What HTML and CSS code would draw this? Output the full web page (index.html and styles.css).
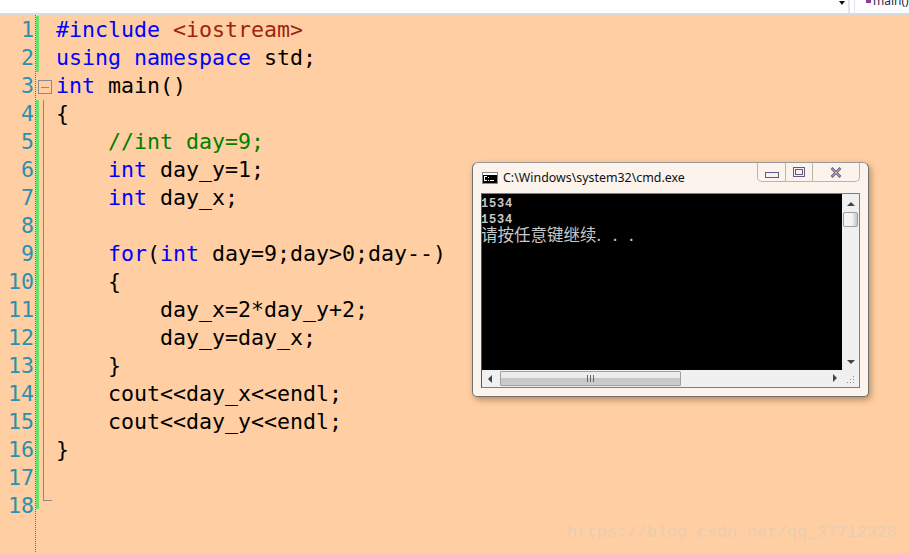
FILE: index.html
```html
<!DOCTYPE html>
<html lang="en">
<head>
<meta charset="utf-8">
<title>main</title>
<link rel="stylesheet" href="styles.css">
</head>
<body>
<header class="topbar">
  <div class="combo"><span class="combo-arrow"></span></div>
  <div class="member"><span class="member-icon"></span><span class="member-text">main()</span></div>
</header>
<main class="editor">
  <div class="numbers">
    <div>1</div><div>2</div><div>3</div><div>4</div><div>5</div><div>6</div><div>7</div><div>8</div><div>9</div><div>10</div><div>11</div><div>12</div><div>13</div><div>14</div><div>15</div><div>16</div><div>17</div><div>18</div>
  </div>
  <div class="margin">
    <span class="change c1"></span><span class="change c2"></span>
    <span class="fold-box"></span>
    <span class="fold-line"></span>
    <span class="fold-end"></span>
  </div>
  <pre class="code"><span class="kw">#include</span> <span class="str">&lt;iostream&gt;</span>
<span class="kw">using</span> <span class="kw">namespace</span> std;
<span class="kw">int</span> main()
{
    <span class="cm">//int day=9;</span>
    <span class="kw">int</span> day_y=1;
    <span class="kw">int</span> day_x;

    <span class="kw">for</span>(<span class="kw">int</span> day=9;day&gt;0;day--)
    {
        day_x=2*day_y+2;
        day_y=day_x;
    }
    cout&lt;&lt;day_x&lt;&lt;endl;
    cout&lt;&lt;day_y&lt;&lt;endl;
}</pre>
</main>
<section class="cmd">
  <div class="titlebar">
    <svg class="cmd-icon" width="16" height="12" viewBox="0 0 16 12"><rect x="0.5" y="0.5" width="15" height="11" fill="#fff" stroke="#8a8a8a"/><rect x="1" y="3" width="14" height="8" fill="#000"/><path d="M2 4h3v1H3v3h2v1H2zM6 5h1v1H6zM6 8h1v1H6zM8 8h4v1H8z" fill="#fff"/></svg>
    <span class="cmd-title">C:\Windows\system32\cmd.exe</span>
    <div class="controls">
      <div class="ctl ctl-min"><span class="min-glyph"></span></div>
      <div class="ctl ctl-max"><span class="max-glyph"></span></div>
      <div class="ctl ctl-close"><svg width="12" height="11" viewBox="0 0 12 11"><path d="M1.5 1 L10.5 10 M10.5 1 L1.5 10" stroke="#5f5a78" stroke-width="2.6" fill="none"/><path d="M2 1.5 L10 9.5 M10 1.5 L2 9.5" stroke="#f5f1f3" stroke-width="0.8" fill="none"/></svg></div>
    </div>
  </div>
  <div class="client">
    <div class="client-row">
      <pre class="console"><span class="out">1534</span>
<span class="out">1534</span>
<span class="cn">请按任意键继续<span class="dots">. . .</span></span></pre>
      <div class="vscroll">
        <span class="arr-up"></span>
        <span class="vthumb"></span>
        <span class="arr-down"></span>
      </div>
    </div>
    <div class="hscroll">
      <span class="arr-left"></span>
      <div class="hthumb"><span class="grip"></span></div>
      <span class="arr-right"></span>
      <svg class="resize" width="12" height="12" viewBox="0 0 12 12"><path d="M9 2h1v1H9zM6 5h1v1H6zM9 5h1v1H9zM3 8h1v1H3zM6 8h1v1H6zM9 8h1v1H9z" fill="#8c8c8c"/></svg>
    </div>
  </div>
</section>
<div class="watermark">https://blog.csdn.net/qq_37712328</div>
</body>
</html>
```
FILE: styles.css
```css
html, body {
  margin: 0;
  padding: 0;
  width: 909px;
  height: 553px;
  overflow: hidden;
  background: #ffcfa3;
}
.topbar {
  height: 13px;
  background: #fff;
  border-bottom: 2px solid #d8dbe0;
  display: flex;
  justify-content: flex-end;
  overflow: hidden;
}
.combo {
  width: 68px;
  position: relative;
  border-right: 2px solid #e4e6ea;
}
.combo-arrow {
  position: absolute;
  right: 3px;
  top: 1px;
  border-left: 3px solid transparent;
  border-right: 3px solid transparent;
  border-top: 4px solid #111;
}
.member {
  width: 55px;
  margin-left: 4px;
  border-left: 1px solid #e4e6ea;
  display: flex;
  gap: 2px;
  padding-left: 11px;
  box-sizing: border-box;
  overflow: hidden;
}
.member-icon {
  width: 5px;
  height: 3px;
  background: #8a3c9c;
  flex: none;
}
.member-text {
  font: 12px/1 "Noto Sans", "Liberation Sans", sans-serif;
  color: #1c2a50;
  margin-top: -5px;
  white-space: nowrap;
}
.editor {
  display: flex;
  height: 538px;
  padding-top: 1px;
  box-sizing: border-box;
  font-family: "DejaVu Sans Mono", monospace;
  font-size: 21.6px;
  line-height: 28px;
}
.numbers {
  width: 34px;
  text-align: right;
  color: #2b91af;
  height: 537px;
}
.margin {
  width: 23px;
  position: relative;
  flex: none;
  background-image: linear-gradient(#2f7f99 50%, transparent 50%);
  background-size: 1px 2px;
  background-repeat: repeat-y;
  background-position: 1px 0;
  margin-top: -1px;
  margin-right: -1px;
}
.change {
  position: absolute;
  left: 2px;
  width: 3px;
  background: #6ce06c;
}
.c1 { top: 1px; height: 56px; }
.c2 { top: 85px; height: 409px; }
.fold-box {
  position: absolute;
  left: 4px;
  top: 65px;
  width: 14px;
  height: 14px;
  border: 1px solid #8a8a8e;
  box-sizing: border-box;
  background: linear-gradient(#8a8a8e, #8a8a8e) center / 8px 1px no-repeat;
}
.fold-line {
  position: absolute;
  left: 9px;
  top: 85px;
  width: 1px;
  height: 401px;
  background: #8a8a8e;
}
.fold-end {
  position: absolute;
  left: 9px;
  top: 485px;
  width: 9px;
  height: 1px;
  background: #8a8a8e;
}
.code {
  margin: 0;
  font: inherit;
  color: #000;
}
.kw { color: #0000ff; }
.str { color: #9c2410; }
.cm { color: #008000; }
.cmd {
  position: absolute;
  left: 472px;
  top: 162px;
  width: 397px;
  height: 235px;
  box-sizing: border-box;
  background: #fbf3ec;
  border: 1px solid #6f6f6f;
  border-top-color: #9a9a9a;
  border-radius: 6px 6px 5px 5px;
  box-shadow: 2px 3px 6px rgba(90, 60, 30, .45);
  padding: 0 8px 8px 8px;
  display: flex;
  flex-direction: column;
}
.titlebar {
  height: 30px;
  display: flex;
  align-items: flex-start;
  flex: none;
}
.cmd-icon {
  margin-top: 9px;
  margin-left: 1px;
  flex: none;
}
.cmd-title {
  font: 12.4px/1 "Noto Sans", "Liberation Sans", sans-serif;
  color: #111;
  margin-left: 5px;
  margin-top: 9px;
  white-space: nowrap;
}
.controls {
  margin-left: auto;
  display: flex;
  height: 19px;
  border: 1px solid #b9b4b2;
  border-top: 0;
  border-radius: 0 0 5px 5px;
  box-sizing: border-box;
}
.ctl {
  display: flex;
  align-items: center;
  justify-content: center;
}
.ctl-min { width: 27px; border-right: 1px solid #b9b4b2; }
.ctl-max { width: 26px; border-right: 1px solid #b9b4b2; }
.ctl-close { width: 46px; }
.min-glyph {
  width: 12px;
  height: 4px;
  margin-top: 5px;
  border: 1px solid #615c7c;
  background: #f6f2f4;
}
.max-glyph {
  width: 10px;
  height: 8px;
  border: 1px solid #615c7c;
  box-shadow: inset 0 0 0 1px #f6f2f4, inset 0 0 0 2px #615c7c;
  background: #f6f2f4;
}
.client {
  flex: 1;
  border: 1px solid #7d7d7d;
  border-left-color: #555;
  display: flex;
  flex-direction: column;
  min-height: 0;
}
.client-row {
  flex: 1;
  display: flex;
  min-height: 0;
}
.console {
  flex: 1;
  margin: 0;
  background: #000;
  color: #c8c8c8;
  padding-top: 2px;
  font: bold 12px/16px "Liberation Mono", monospace;
  white-space: pre;
  overflow: hidden;
}
.out { letter-spacing: .8px; margin-left: -1px; }
.cn {
  display: block;
  font: 16.5px/16px "Noto Sans CJK SC", sans-serif;
  margin-top: -2px;
  margin-left: -1px;
}
.dots {
  letter-spacing: 4px;
}
.vscroll {
  width: 17px;
  background: #f0f0f0;
  position: relative;
  flex: none;
}
.arr-up {
  position: absolute;
  left: 5px;
  top: 8px;
  border-left: 4px solid transparent;
  border-right: 4px solid transparent;
  border-bottom: 4px solid #444;
}
.arr-down {
  position: absolute;
  left: 5px;
  bottom: 6px;
  border-left: 4px solid transparent;
  border-right: 4px solid transparent;
  border-top: 4px solid #444;
}
.vthumb {
  position: absolute;
  left: 1px;
  top: 18px;
  width: 15px;
  height: 15px;
  box-sizing: border-box;
  border: 1px solid #a0a0a0;
  border-radius: 2px;
  background: linear-gradient(90deg, #f4f4f4 60%, #c4c4c4);
}
.hscroll {
  height: 17px;
  background: #f0f0f0;
  display: flex;
  align-items: center;
  position: relative;
  flex: none;
}
.arr-left {
  margin-left: 6px;
  border-top: 4px solid transparent;
  border-bottom: 4px solid transparent;
  border-right: 4px solid #444;
}
.hthumb {
  margin-left: 8px;
  width: 181px;
  height: 15px;
  box-sizing: border-box;
  border: 1px solid #a0a0a0;
  border-radius: 1px;
  background: linear-gradient(#ececec 50%, #c6c6c6 50%, #cdcdcd);
  display: flex;
  justify-content: center;
  align-items: center;
}
.grip {
  width: 7px;
  height: 7px;
  background: repeating-linear-gradient(90deg, #666 0 1px, transparent 1px 3px);
}
.arr-right {
  position: absolute;
  left: 351px;
  top: 4px;
  border-top: 4px solid transparent;
  border-bottom: 4px solid transparent;
  border-left: 4px solid #444;
}
.resize {
  position: absolute;
  right: 3px;
  bottom: 1px;
}
.watermark {
  position: absolute;
  left: 567px;
  top: 522px;
  font: 16.67px/22px "Liberation Mono", "DejaVu Sans Mono", monospace;
  color: #e9cdae;
  white-space: nowrap;
}
```
